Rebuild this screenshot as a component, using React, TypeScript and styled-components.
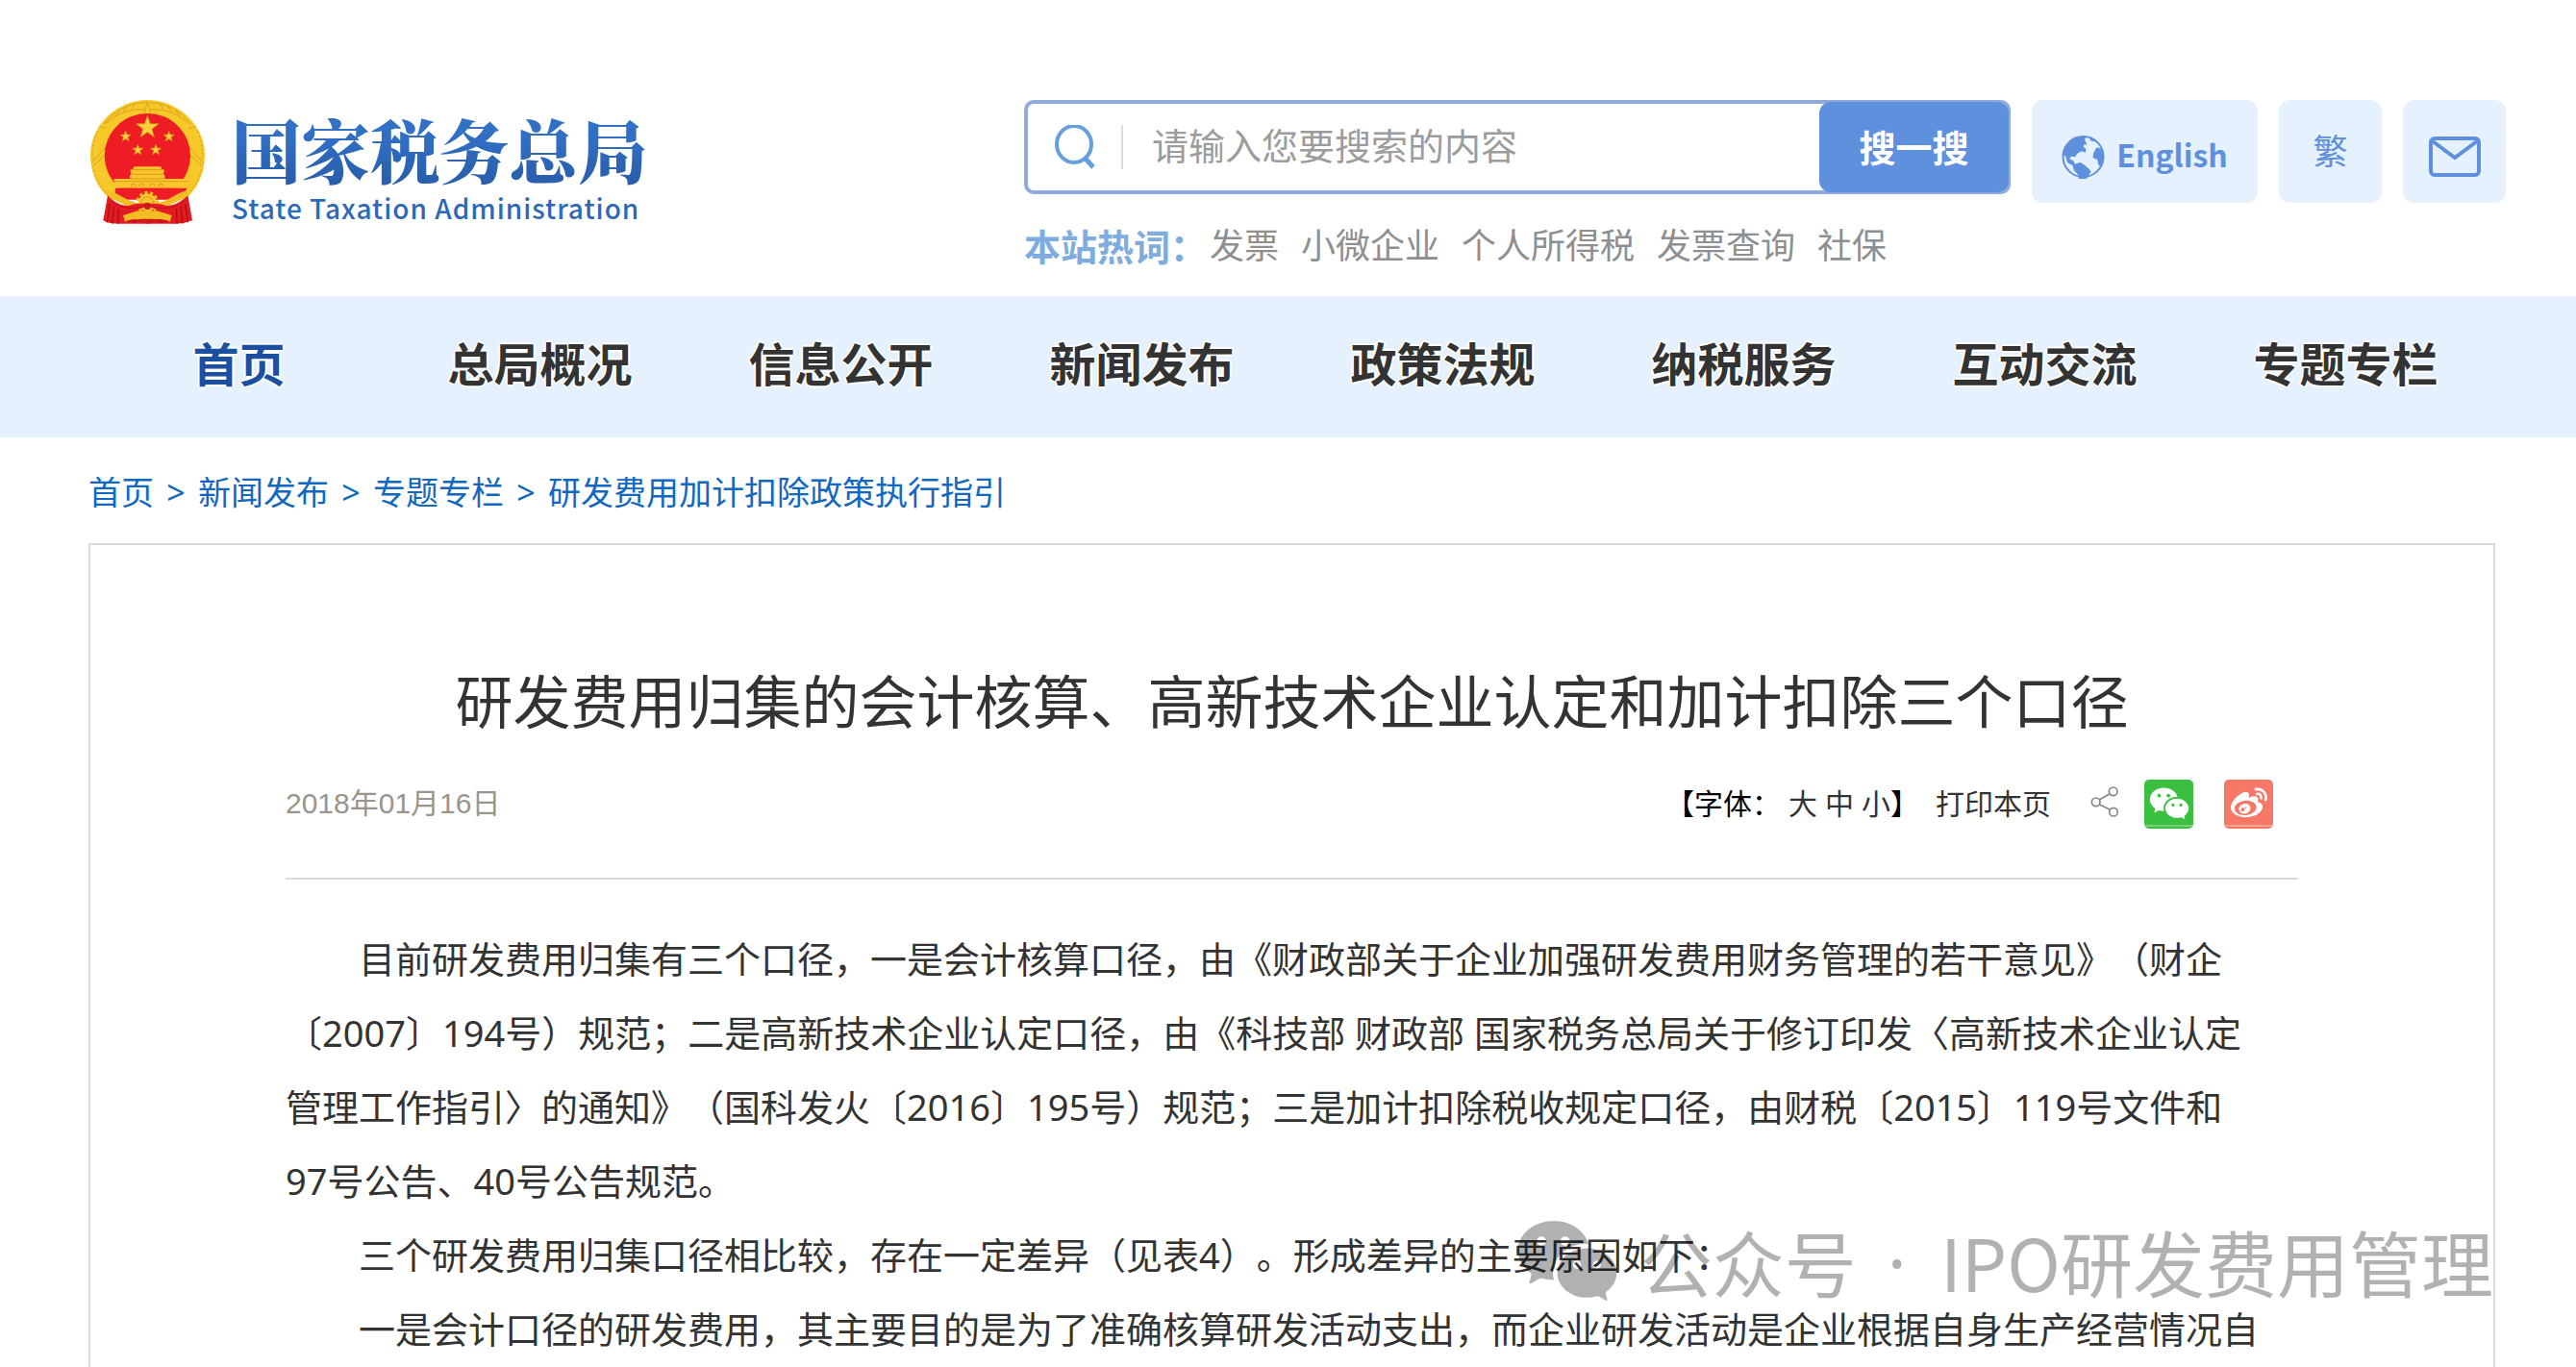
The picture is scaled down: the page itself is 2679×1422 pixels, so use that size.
import React from "react";
import styled, { createGlobalStyle } from "styled-components";
import { FaWeibo } from "react-icons/fa";
import { RiWechatFill } from "react-icons/ri";

const sans = `"Noto Sans", "Noto Sans CJK SC", sans-serif`;
const cjk = `"Noto Sans CJK SC", sans-serif`;

const GlobalStyle = createGlobalStyle`
  *, *::before, *::after { box-sizing: border-box; }
  body { margin: 0; background: #fff; color: #333; font-family: ${sans}; text-spacing-trim: space-all; }
  a { color: inherit; text-decoration: none; }
  button { border: 0; padding: 0; font: inherit; cursor: pointer; }
  h1, p, ul, ol { margin: 0; padding: 0; }
  ul, ol { list-style: none; }
  svg { display: block; }
`;

const Page = styled.div`
  display: flex;
  flex-direction: column;
  min-height: 100vh;
  overflow: hidden;
`;

const Header = styled.header`
  display: flex;
  justify-content: space-between;
  align-items: flex-start;
  gap: 40px;
  padding: 104px 73px 32px 93px;
`;

const Brand = styled.a`
  display: flex;
  flex: none;
  align-items: flex-start;
  gap: 27px;
`;

const BrandText = styled.span`
  display: flex;
  flex-direction: column;
  padding-top: 8px;
  color: #2e68b8;
`;

const BrandName = styled.span`
  font: 900 72px/84px "Noto Serif CJK SC", "Noto Sans CJK SC", serif;
  background: linear-gradient(#3270c6 30%, #2a5fab 90%);
  background-clip: text;
  color: transparent;
`;

const BrandLatin = styled.span`
  font: 500 28px/40px ${cjk};
  letter-spacing: 1px;
`;

const Tools = styled.div`
  display: flex;
  flex: 0 1 1541px;
  flex-direction: column;
  gap: 25px;
`;

const ToolRow = styled.div`
  display: flex;
  align-items: flex-start;
  gap: 22px;
`;

const SearchForm = styled.form`
  display: flex;
  flex: 1;
  height: 98px;
  align-items: center;
  border: 4px solid #8eabd9;
  border-radius: 10px;
`;

const SearchLabel = styled.label`
  flex: none;
  padding: 0 26px 0 28px;
  border-right: 2px solid #ddd;
`;

const SearchInput = styled.input`
  flex: 1;
  min-width: 0;
  height: 80px;
  padding: 0 30px 4px;
  border: 0;
  outline: 0;
  background: none;
  color: #333;
  font: 38px/48px ${sans};
  &::placeholder { color: #9c9c9c; opacity: 1; }
`;

const SearchButton = styled.button`
  width: 197px;
  height: 94px;
  margin: -2px;
  border-radius: 12px;
  background: #5f90de;
  color: #fff;
  font: 700 38px/48px ${sans};
`;

const Tile = styled.a<{ $wide?: boolean }>`
  display: flex;
  flex: none;
  align-items: center;
  justify-content: center;
  gap: 12px;
  width: ${(p) => (p.$wide ? 235 : 107)}px;
  height: 107px;
  border-radius: 12px;
  background: #e5f1fe;
  color: #5f90de;
  font: 36px/48px ${sans};
`;

const TileLabel = styled.span`
  padding-top: 4px;
  font: 700 32px/48px ${cjk};
`;

const TileIcon = styled.span`
  padding-top: 10px;
`;

const HotWords = styled.div`
  display: flex;
  gap: 23px;
  color: #8f8f8f;
  font-size: 36px;
  line-height: 40px;
`;

const HotLabel = styled.strong`
  margin-right: -20px;
  color: #7facdf;
  font-size: 38px;
`;

const Nav = styled.nav`
  padding: 0 83px 0 92px;
  background: #e5f1fe;
`;

const NavList = styled.ul`
  display: grid;
  grid-template-columns: repeat(8, 1fr);
  padding: 35px 0 40px;
`;

const NavLink = styled.a<{ $active?: boolean }>`
  display: block;
  color: ${(p) => (p.$active ? "#1d4fa1" : "#333")};
  font-size: 48px;
  font-weight: 700;
  line-height: 72px;
  text-align: center;
  text-shadow: 2px 0 #fff, -2px 0 #fff, 0 2px #fff, 0 -2px #fff;
`;

const Crumbs = styled.ol`
  display: flex;
  padding: 33px 92px 29px;
  color: #1268c0;
  font-size: 34px;
  line-height: 48px;
`;

const Crumb = styled.li`
  & + &::before {
    content: ">";
    display: inline-block;
    width: 46px;
    text-align: center;
  }
`;

const Article = styled.article`
  position: relative;
  flex: 1;
  margin: 0 84px 0 92px;
  padding: 127px 203px 0;
  border: 2px solid #dcdcda;
  border-bottom: 0;
`;

const Title = styled.h1`
  font-size: 60px;
  font-weight: 400;
  line-height: 72px;
  text-align: center;
`;

const Meta = styled.div`
  display: flex;
  justify-content: space-between;
  align-items: center;
  margin-top: 44px;
  padding: 0 26px 51px 0;
  border-bottom: 2px solid #dbdcd7;
  font-size: 30px;
  line-height: 52px;
`;

const PostDate = styled.time`
  color: #99958b;
  font-family: "Liberation Sans", "Noto Sans CJK SC", sans-serif;
`;

const MetaTools = styled.div`
  display: flex;
  align-items: center;
`;

const FontSizes = styled.div`
  display: flex;
  margin-right: 17px;
  color: #000;
`;

const SizeList = styled.span`
  display: flex;
  gap: 8px;
  padding-left: 8px;
`;

const TextButton = styled.button`
  background: none;
  color: #333;
`;

const ShareMark = styled.span`
  margin: 0 26px 4px 41px;
`;

const ShareLink = styled.a<{ $bg: string }>`
  display: flex;
  align-items: center;
  justify-content: center;
  width: 51px;
  height: 51px;
  border-radius: 5px;
  background: linear-gradient(transparent 47px, rgba(255, 255, 255, 0.3) 47px, rgba(255, 255, 255, 0.3) 49px, transparent 49px) ${(p) => p.$bg};
  color: #fff;
  & + & { margin-left: 32px; }
`;

const Body = styled.div`
  padding-top: 44px;
  font-size: 38px;
  line-height: 77px;
  white-space: nowrap;
`;

const Para = styled.p`
  text-indent: 2em;
`;

const Watermark = styled.div`
  position: absolute;
  right: 0;
  bottom: 54px;
  display: flex;
  align-items: center;
  color: #000;
  opacity: 0.3;
  font: 75px/100px ${cjk};
  white-space: nowrap;
  pointer-events: none;
`;

const WatermarkIcon = styled.span`
  margin-right: 20px;
`;

const Dot = styled.span`
  margin: 0 35px 0 32px;
  font-family: ${sans};
`;

const star = (cx: number, cy: number, r: number) =>
  Array.from({ length: 10 }, (_, i) => {
    const q = i % 2 ? r * 0.4 : r;
    const a = (Math.PI * i) / 5 - Math.PI / 2;
    return `${(cx + q * Math.cos(a)).toFixed(1)},${(cy + q * Math.sin(a)).toFixed(1)}`;
  }).join(" ");

const Emblem = () => (
  <svg width="121" height="130" viewBox="15 18 363 390" aria-hidden="true">
    <path d="M196 18C290 18 375 95 375 190c0 60-25 105-58 135H76C43 295 18 250 18 190 18 95 103 18 196 18z" fill="#f7c829" />
    <g fill="none" stroke="#d9a21c" strokeWidth="3">
      <path d="M60 95C90 50 140 28 190 26M332 95C302 50 252 28 202 26M66 92c30-28 70-48 120-44M326 92c-30-28-70-48-120-44" />
      <path d="M44 100l24 6M348 100l-24 6M22 215l42-48M370 215l-42-48M24 226l46-42M368 226l-46-42M196 22l-10 40M196 22l10 40" />
      <path d="M28 235c6 30 22 58 46 80M364 235c-6 30-22 58-46 80" strokeDasharray="8 6" />
      <path d="M40 115c-14 30-18 60-14 88M352 115c14 30 18 60 14 88" strokeDasharray="8 6" />
      <path d="M95 70l14-18M120 56l12-18M148 46l8-18M298 70l-14-18M272 56l-12-18M244 46l-8-18" />
    </g>
    <ellipse cx="196" cy="192" rx="134" ry="132" fill="#ee1c25" />
    <g fill="#fdd039" stroke="#cf8d16" strokeWidth="2">
      <polygon points={star(196, 104, 37)} />
      <polygon points={star(128, 132, 18)} />
      <polygon points={star(263, 132, 18)} />
      <polygon points={star(166, 174, 18)} />
      <polygon points={star(222, 174, 18)} />
    </g>
    <path d="M154 226h84l3 8 8 3-4 12 5 4v11h76l-6 29H96l-5-29h50v-11l5-4-4-12 8-3z" fill="#fbc62d" />
    <path d="M150 236h92M145 250h102M141 264h110M92 272h234" stroke="#dc9d1a" strokeWidth="3" />
    <path d="M146 288v-8h12v8M172 288v-8h12v8M206 288v-8h12v8M232 288v-8h12v8" stroke="#dc9d1a" strokeWidth="3" fill="none" />
    <path d="M96 293h224l-22 36H94z" fill="#ee1c25" />
    <path d="M72 316l-14 78c14 8 30 10 46 10h184c16 0 30-4 48-10l-14-78-40 38H112z" fill="#e21b23" />
    <path d="M136 398l20-20h84l24 20-20 5-24-4-24 5-26-5-22 4z" fill="#d3161e" />
    <path d="M78 342l-8 58M92 350l-6 54M106 352l-2 52M314 342l8 58M300 350l6 54M286 352l2 52M156 384v18M240 384v18" stroke="#a80f17" strokeWidth="4" />
    <path d="M70 300c40 8 62 38 108 42l36 0c46-4 68-34 108-42l-8 24c-26 8-50 28-84 32h-68c-34-4-58-24-84-32z" fill="#f2bd22" />
    <path d="M120 378l46-14h60l46 14-6 20c-22-12-34-4-70-10-36 6-48-2-70 10z" fill="#f2bd22" />
    <circle cx="196" cy="338" r="28" fill="#fbc62d" />
    <circle cx="196" cy="338" r="31" fill="none" stroke="#f2bd22" strokeWidth="9" strokeDasharray="10 7" />
    <path d="M176 340a20 20 0 0 1 40 0z" fill="none" stroke="#d9981a" strokeWidth="3" />
    <circle cx="196" cy="378" r="12" fill="#f2bd22" />
    <path d="M72 318c20 18 40 30 66 30 20-8 40-8 58-4 18-4 38-4 58 4 26 0 46-12 66-30-8 30-34 44-58 46-24 0-46-6-66-16-20 10-42 16-66 16-24-2-50-16-58-46z" fill="#e81c24" />
    <path d="M80 332c24 24 74 30 108 16M312 332c-24 24-74 30-108 16" fill="none" stroke="#b5121a" strokeWidth="3" />
    <circle cx="196" cy="349" r="11" fill="#d3161e" />
  </svg>
);

const SearchIcon = () => (
  <svg width="43" height="46" viewBox="0 0 43 46" fill="none" stroke="#659fdd" strokeWidth="4" aria-hidden="true">
    <ellipse cx="20" cy="20" rx="18" ry="19" />
    <path d="M31 34l9 10" strokeWidth="5" />
  </svg>
);

const GlobeIcon = () => (
  <svg width="45" height="46" viewBox="116 118 134 138" aria-hidden="true">
    <circle cx="183" cy="187" r="63" fill="none" stroke="#5f90de" strokeWidth="6" />
    <path
      fill="#5f90de"
      d="M119 178C122 148 150 122 192 122l-4 14 8 14-10-2-2 10 8 4-2 12-12-4-14 8-6 10-12-2-6 8 12 6 6 10 16-6 14 10 14 12 6 8-12 16-6 14-2 18-14 0-4-22-2-16-14-14-4-16-16-8-6-20-12-8zM247 188c-2-10-4-18-8-26l-14-4-10 18-2 14 14 6 4 18 8 4c5-8 8-18 8-30zM206 128l16 8-6 4-12-4z"
    />
  </svg>
);

const MailIcon = () => (
  <svg width="54" height="42" viewBox="0 0 54 42" fill="none" stroke="#5f90de" strokeWidth="4" aria-hidden="true">
    <rect x="2" y="2" width="50" height="38" rx="4" />
    <path d="M4 5l23 17L50 5" />
  </svg>
);

const ShareIcon = () => (
  <svg width="30" height="32" viewBox="45 66 90 96" fill="none" stroke="#858585" strokeWidth="5" aria-hidden="true">
    <circle cx="62" cy="115" r="13" />
    <circle cx="116" cy="82" r="13" />
    <circle cx="117" cy="146" r="13" />
    <path d="M74 107l30-17M74 123l31 15" />
  </svg>
);

const navItems = ["首页", "总局概况", "信息公开", "新闻发布", "政策法规", "纳税服务", "互动交流", "专题专栏"];
const hotWords = ["发票", "小微企业", "个人所得税", "发票查询", "社保"];
const crumbs = ["首页", "新闻发布", "专题专栏", "研发费用加计扣除政策执行指引"];
const paragraphs = [
  [
    "目前研发费用归集有三个口径，一是会计核算口径，由《财政部关于企业加强研发费用财务管理的若干意见》（财企",
    "〔2007〕194号）规范；二是高新技术企业认定口径，由《科技部 财政部 国家税务总局关于修订印发〈高新技术企业认定",
    "管理工作指引〉的通知》（国科发火〔2016〕195号）规范；三是加计扣除税收规定口径，由财税〔2015〕119号文件和",
    "97号公告、40号公告规范。",
  ],
  ["三个研发费用归集口径相比较，存在一定差异（见表4）。形成差异的主要原因如下："],
  ["一是会计口径的研发费用，其主要目的是为了准确核算研发活动支出，而企业研发活动是企业根据自身生产经营情况自"],
];

export default function App() {
  return (
    <>
      <GlobalStyle />
      <Page>
        <Header>
          <Brand href="#">
            <Emblem />
            <BrandText>
              <BrandName>国家税务总局</BrandName>
              <BrandLatin>State Taxation Administration</BrandLatin>
            </BrandText>
          </Brand>
          <Tools>
            <ToolRow>
              <SearchForm role="search" onSubmit={(e) => e.preventDefault()}>
                <SearchLabel htmlFor="q" aria-label="搜索">
                  <SearchIcon />
                </SearchLabel>
                <SearchInput id="q" type="text" placeholder="请输入您要搜索的内容" />
                <SearchButton type="submit">搜一搜</SearchButton>
              </SearchForm>
              <Tile href="#" $wide>
                <TileIcon>
                  <GlobeIcon />
                </TileIcon>
                <TileLabel>English</TileLabel>
              </Tile>
              <Tile href="#">繁</Tile>
              <Tile href="#" aria-label="邮箱">
                <TileIcon>
                  <MailIcon />
                </TileIcon>
              </Tile>
            </ToolRow>
            <HotWords>
              <HotLabel>本站热词：</HotLabel>
              {hotWords.map((w) => (
                <a href="#" key={w}>{w}</a>
              ))}
            </HotWords>
          </Tools>
        </Header>
        <Nav>
          <NavList>
            {navItems.map((n, i) => (
              <li key={n}>
                <NavLink href="#" $active={i === 0}>{n}</NavLink>
              </li>
            ))}
          </NavList>
        </Nav>
        <Crumbs>
          {crumbs.map((c) => (
            <Crumb key={c}>
              <a href="#">{c}</a>
            </Crumb>
          ))}
        </Crumbs>
        <Article>
          <Title>研发费用归集的会计核算、高新技术企业认定和加计扣除三个口径</Title>
          <Meta>
            <PostDate dateTime="2018-01-16">2018年01月16日</PostDate>
            <MetaTools>
              <FontSizes>
                【字体：
                <SizeList>
                  <TextButton type="button">大</TextButton>
                  <TextButton type="button">中</TextButton>
                  <TextButton type="button">小</TextButton>
                </SizeList>
                】
              </FontSizes>
              <TextButton type="button">打印本页</TextButton>
              <ShareMark>
                <ShareIcon />
              </ShareMark>
              <ShareLink href="#" $bg="#3abf40" aria-label="微信">
                <RiWechatFill size={44} />
              </ShareLink>
              <ShareLink href="#" $bg="#f67866" aria-label="微博">
                <FaWeibo size={38} />
              </ShareLink>
            </MetaTools>
          </Meta>
          <Body>
            {paragraphs.map((lines) => (
              <Para key={lines[0]}>
                {lines.map((line, i) => (
                  <React.Fragment key={line}>
                    {i > 0 && <br />}
                    {line}
                  </React.Fragment>
                ))}
              </Para>
            ))}
          </Body>
          <Watermark aria-hidden="true">
            <WatermarkIcon>
              <RiWechatFill size={112} />
            </WatermarkIcon>
            公众号<Dot>·</Dot>IPO研发费用管理
          </Watermark>
        </Article>
      </Page>
    </>
  );
}
